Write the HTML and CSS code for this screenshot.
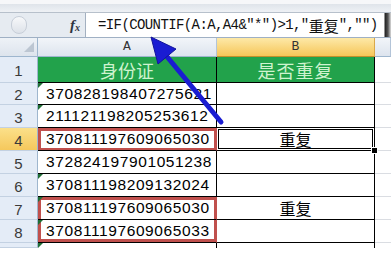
FILE: index.html
```html
<!DOCTYPE html>
<html lang="zh-CN">
<head>
  <meta charset="UTF-8" />
  <meta name="viewport" content="width=device-width,initial-scale=1" />
  <title>COUNTIF 查重</title>
  <link rel="stylesheet" href="styles.css">
</head>
<body>
  <div class="top"></div>

  <div class="fbar">
    <div class="namebox"><span class="knob"></span><span class="fx">f<sub>x</sub></span></div>
    <div class="formula">=IF(COUNTIF(A:A,A4&amp;"*")&gt;1,"<span class="cjk">重复</span>","")</div>
    <div class="expand"></div>
  </div>

  <div class="sheet">
    <div class="corner"></div><div class="ch">A</div><div class="ch sel">B</div><div class="ch"></div>

    <div class="rh">1</div><div class="c head">身份证</div><div class="c head wide">是否重复</div><div class="cc"></div>
    <div class="rh">2</div><div class="c num tri">370828198407275621</div><div class="c b"></div><div class="cc"></div>
    <div class="rh">3</div><div class="c num tri">211121198205253612</div><div class="c b"></div><div class="cc"></div>
    <div class="rh sel">4</div><div class="c num hl">370811197609065030</div><div class="c b act">重复<span class="handle"></span></div><div class="cc"></div>
    <div class="rh">5</div><div class="c num">372824197901051238</div><div class="c b"></div><div class="cc"></div>
    <div class="rh">6</div><div class="c num tri">370811198209132024</div><div class="c b"></div><div class="cc"></div>
    <div class="rh">7</div><div class="c num tri hl-top">370811197609065030</div><div class="c b">重复</div><div class="cc"></div>
    <div class="rh">8</div><div class="c num tri hl-bot">370811197609065033</div><div class="c b"></div><div class="cc"></div>
    <div class="rh"></div><div class="c tri open"></div><div class="c open"></div><div class="cc open"></div>
  </div>

  <!-- blue arrow drawn over the sheet -->
  <svg class="arrow" width="391" height="260" viewBox="0 0 391 260">
    <line x1="221" y1="122" x2="164" y2="53" stroke="#1a1cd2" stroke-width="5" stroke-linecap="round" />
    <polygon points="151,37 176,49 158,64" fill="#1a1cd2" stroke="#12149a" stroke-width="1" stroke-linejoin="round" />
  </svg>
</body>
</html>
```

FILE: styles.css
```css
body { margin: 0; width: 391px; height: 260px; background: #fff; overflow: hidden; position: relative; }

.top { height: 13px; box-sizing: border-box; border-top: 4px solid #f6f7f9; border-bottom: 1px solid #b7c0cb; background: linear-gradient(#dfe4ea, #eef1f5); }

.fbar { display: flex; height: 25px; box-sizing: border-box; border-bottom: 1px solid #9fb0c4; background: #e6ebf1; }
.namebox { width: 85px; display: flex; align-items: center; position: relative; }
.knob { width: 14px; height: 16px; margin-left: 11px; border: 1px solid #c7ced8; border-radius: 8px; background: linear-gradient(#f7f8fa, #dde2e9); }
.fx { margin-left: auto; margin-right: 5px; font-family: "Liberation Serif", serif; font-style: italic; font-weight: bold; font-size: 15px; color: #2d3440; }
.fx sub { font-size: 10px; vertical-align: -1px; }
.formula { flex: 1; background: #fff; border-left: 1px solid #a3b0c0; padding-left: 12px; display: flex; align-items: center; white-space: nowrap; overflow: hidden;
  font-family: "Liberation Mono", "Noto Sans CJK SC", monospace; font-size: 14px; letter-spacing: -0.6px; color: #111; }
.formula .cjk { font-family: "Noto Sans CJK SC", sans-serif; font-size: 15px; letter-spacing: 0; }
.expand { width: 9px; background: linear-gradient(90deg, #fff 0, #fff 2px, #222 3px, #555 6px, #ddd 9px); }

.sheet { display: grid; grid-template-columns: 38px 179px 158px 16px; grid-template-rows: 19px 26px 22px repeat(6, 23px) 5px; }
.sheet > div { box-sizing: border-box; position: relative; }

.corner { background: linear-gradient(#eef2f7, #dde4ed); border-right: 1px solid #9eb6ce; border-bottom: 1px solid #9eb6ce; }
.corner::after { content: ""; position: absolute; right: 3px; bottom: 4px; border-left: 10px solid transparent; border-bottom: 10px solid #bcc6d2; }

.ch { background: linear-gradient(#f2f5f9, #dde4ee); border-right: 1px solid #b3c4d8; border-bottom: 1px solid #9eb6ce;
  font-family: "Liberation Mono", monospace; font-size: 13px; color: #333; text-align: center; line-height: 18px; }
.ch.sel { background: linear-gradient(#fde9a8, #f6c659); border-right-color: #d9a84a; border-bottom-color: #c28f2c; }

.rh { background: #e4ecf7; border-right: 1px solid #9eb6ce; border-bottom: 1px solid #c3d1e2;
  font-family: "Liberation Sans", sans-serif; font-size: 15px; color: #3a3a3a; display: flex; align-items: center; justify-content: center; padding-top: 2px; }
.rh.sel { background: linear-gradient(#fbe08a, #f5c85c); }

.c { border-right: 1px solid #000; border-bottom: 1px solid #000; display: flex; align-items: center; color: #000; }
.c.open { border-bottom: none; }
.num { padding-left: 8px; font-family: "Liberation Sans", sans-serif; font-size: 15.5px; letter-spacing: 0.6px; white-space: nowrap; }
.b { justify-content: center; font-family: "Noto Sans CJK SC", sans-serif; font-size: 16px; }
.head { background: #22a24b; justify-content: center; color: #cff3cf; font-family: "Noto Sans CJK SC", sans-serif; font-size: 18px; }
.head.wide { letter-spacing: 1px; }
.cc { border-bottom: 1px solid #dadde2; }
.cc.open { border-bottom: none; }

.tri::before { content: ""; position: absolute; left: 0; top: 0; border-top: 5px solid #1f6e36; border-right: 5px solid transparent; }

.hl { border-right-color: #c0504d; box-shadow: inset 3px 0 #c0504d, inset -2px 0 #c0504d, inset 0 3px #c0504d, inset 0 -2px #c0504d; }
.hl-top { border-right-color: #c0504d; box-shadow: inset 3px 0 #c0504d, inset -2px 0 #c0504d, inset 0 3px #c0504d; }
.hl-bot { border-right-color: #c0504d; box-shadow: inset 3px 0 #c0504d, inset -2px 0 #c0504d, inset 0 -3px #c0504d; }

.act { box-shadow: inset 0 0 0 1px #fff, inset 0 0 0 2px #000; }
.handle { position: absolute; right: -4px; bottom: -4px; width: 5px; height: 5px; background: #000; border: 1px solid #fff; z-index: 2; }

.arrow { position: absolute; left: 0; top: 0; z-index: 5; pointer-events: none; }
```
